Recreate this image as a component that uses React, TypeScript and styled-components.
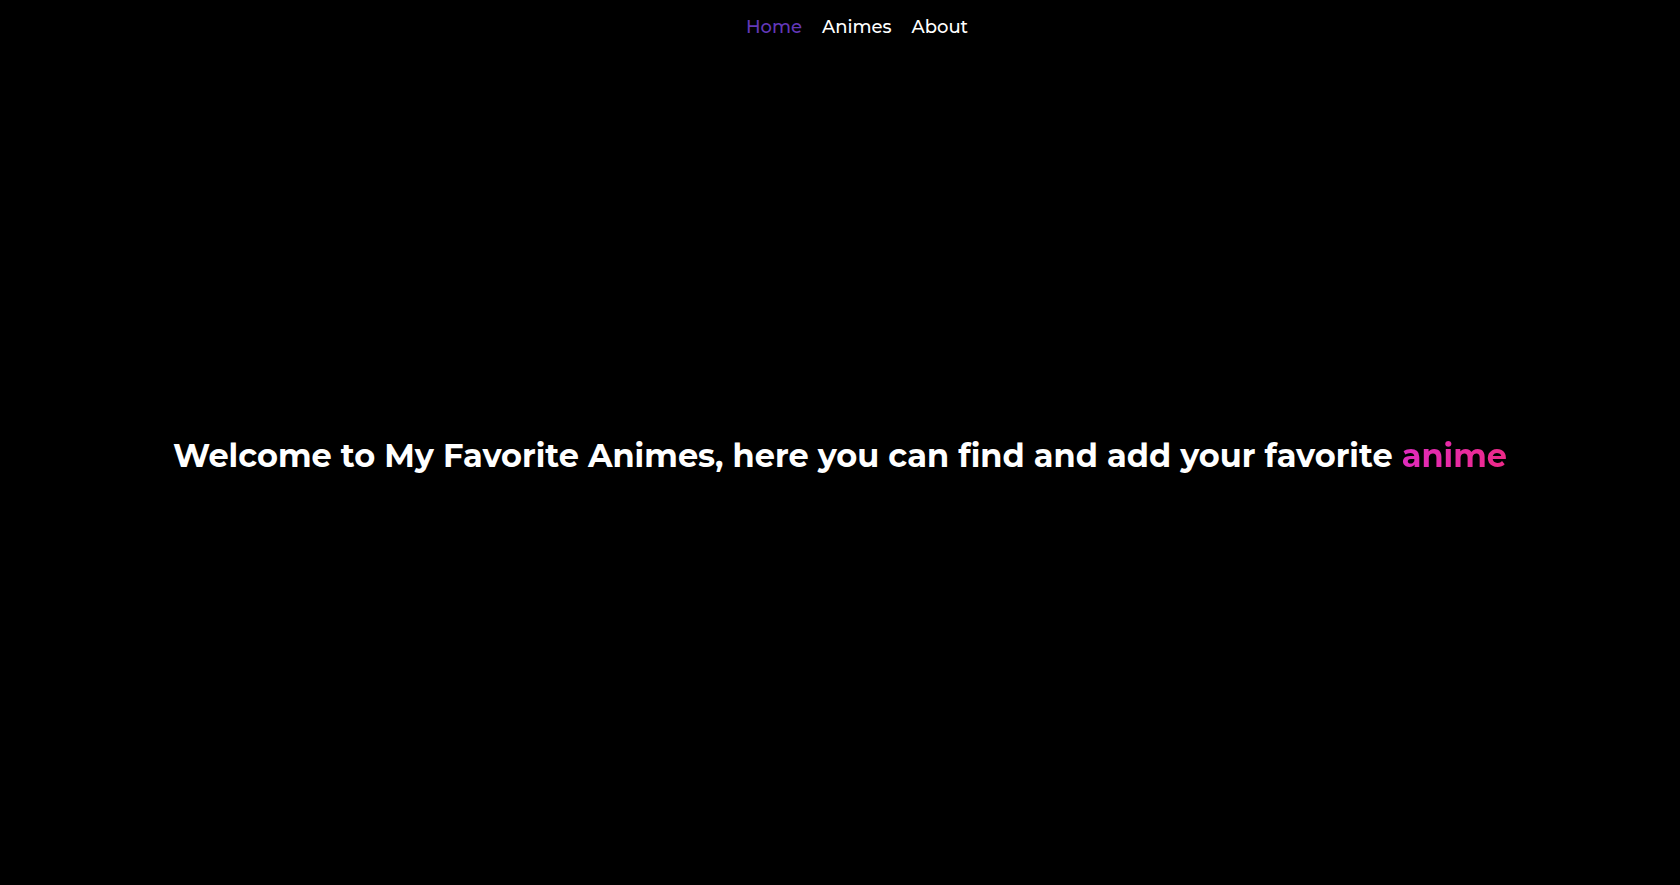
import React from "react";
import styled, { createGlobalStyle } from "styled-components";

const GlobalStyle = createGlobalStyle`
  body {
    margin: 0;
    background: #000000;
    font-family: Montserrat, "DejaVu Sans", "Open Sans", sans-serif;
  }
`;

const links = ["Home", "Animes", "About"];

const App = () => {
  return (
    <Page>
      <GlobalStyle />
      <Nav>
        {links.map((label, i) => (
          <NavLink key={label} active={i === 0}>
            {label}
          </NavLink>
        ))}
      </Nav>
      <Main>
        <Title>
          Welcome to My Favorite Animes, here you can find and add your favorite{" "}
          <Accent>anime</Accent>
        </Title>
      </Main>
    </Page>
  );
};

const Page = styled.div`
  min-height: 100vh;
  display: flex;
  flex-direction: column;
  background: #000000;
`;

const Nav = styled.nav`
  display: flex;
  justify-content: center;
  gap: 20px;
  padding-top: 14px;
  padding-left: 34px;
  height: 40px;
`;

const NavLink = styled.a<{ active?: boolean }>`
  font-size: 18px;
  font-weight: 500;
  line-height: 26px;
  color: ${(p) => (p.active ? "#6338b8" : "#ffffff")};
  cursor: pointer;
  text-decoration: none;
`;

const Main = styled.main`
  flex: 1;
  display: flex;
  align-items: center;
  justify-content: center;
  padding-bottom: 27px;
`;

const Title = styled.h1`
  margin: 0;
  font-size: 32px;
  font-weight: 700;
  line-height: 42px;
  color: #ffffff;
  text-align: center;
`;

const Accent = styled.span`
  background: linear-gradient(90deg, #e02bbd 0%, #ee2a88 100%);
  -webkit-background-clip: text;
  background-clip: text;
  color: transparent;
`;

export default App;
